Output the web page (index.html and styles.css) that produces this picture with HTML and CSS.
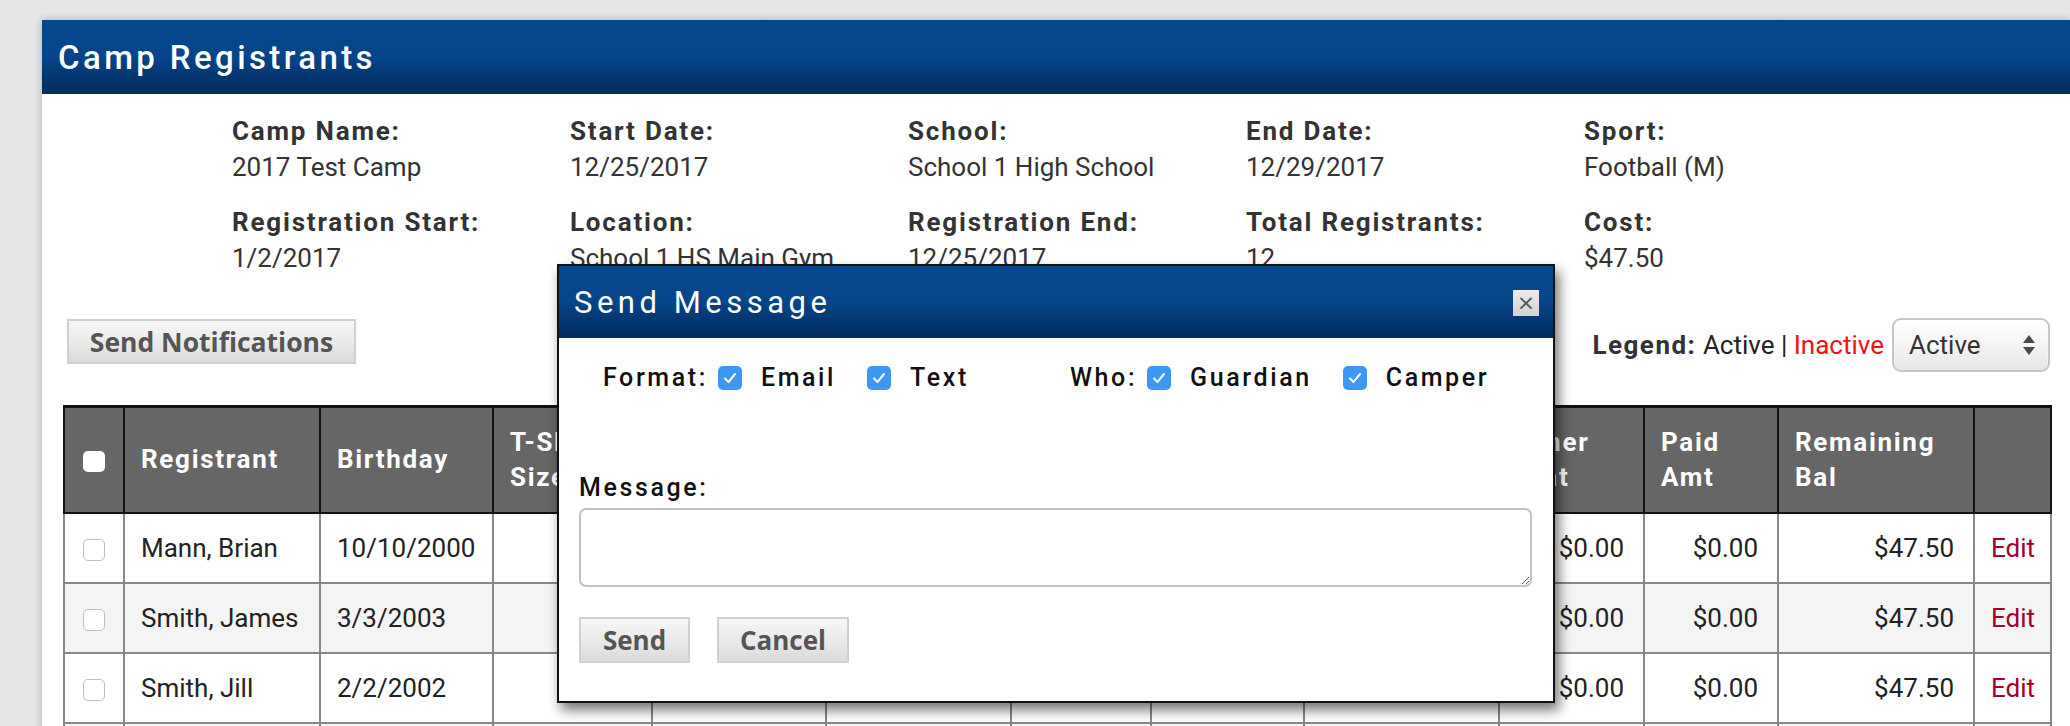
FILE: index.html
```html
<!DOCTYPE html>
<html lang="en">
<head>
<meta charset="utf-8">
<title>Camp Registrants</title>
<link rel="stylesheet" href="styles.css">
</head>
<body>
<div class="panel">
  <div class="panel-head"><h1>Camp Registrants</h1></div>

  <div class="info">
    <div class="field"><div class="lbl">Camp Name:</div><div class="val">2017 Test Camp</div></div>
    <div class="field"><div class="lbl">Start Date:</div><div class="val">12/25/2017</div></div>
    <div class="field"><div class="lbl">School:</div><div class="val">School 1 High School</div></div>
    <div class="field"><div class="lbl">End Date:</div><div class="val">12/29/2017</div></div>
    <div class="field"><div class="lbl">Sport:</div><div class="val">Football (M)</div></div>
    <div class="field"><div class="lbl">Registration Start:</div><div class="val">1/2/2017</div></div>
    <div class="field"><div class="lbl">Location:</div><div class="val">School 1 HS Main Gym</div></div>
    <div class="field"><div class="lbl">Registration End:</div><div class="val">12/25/2017</div></div>
    <div class="field"><div class="lbl">Total Registrants:</div><div class="val">12</div></div>
    <div class="field"><div class="lbl">Cost:</div><div class="val">$47.50</div></div>
  </div>

  <div class="toolbar">
    <button class="btn btn-notify" type="button">Send Notifications</button>
    <div class="legend"><span class="legend-lbl">Legend:</span> Active | <span class="inactive">Inactive</span></div>
    <div class="select">
      <span>Active</span>
      <svg class="select-arrows" width="14" height="22" viewBox="0 0 14 22"><path d="M7 1 L13 9 L1 9 Z" fill="#4a4a4a"/><path d="M1 13 L13 13 L7 21 Z" fill="#4a4a4a"/></svg>
    </div>
  </div>

  <table class="grid">
    <colgroup>
      <col class="c-check"><col class="c-name"><col class="c-bday"><col class="c-shirt"><col class="c-gender"><col class="c-grade"><col class="c-age"><col class="c-fee"><col class="c-disc"><col class="c-other"><col class="c-paid"><col class="c-bal"><col class="c-edit">
    </colgroup>
    <thead>
      <tr>
        <th class="center"><span class="cb cb-head"></span></th>
        <th>Registrant</th>
        <th>Birthday</th>
        <th>T-Shirt<br>Size</th>
        <th>Gender</th>
        <th>Grade</th>
        <th>Age</th>
        <th>Camp<br>Fee</th>
        <th>Discount</th>
        <th>Other<br>Amt</th>
        <th>Paid<br>Amt</th>
        <th>Remaining<br>Bal</th>
        <th></th>
      </tr>
    </thead>
    <tbody>
      <tr>
        <td class="center"><span class="cb"></span></td>
        <td>Mann, Brian</td><td>10/10/2000</td><td></td><td>M</td><td>11</td><td>17</td>
        <td class="num">$47.50</td><td class="num">$0.00</td><td class="num">$0.00</td><td class="num">$0.00</td><td class="num">$47.50</td>
        <td><a class="edit" href="#">Edit</a></td>
      </tr>
      <tr>
        <td class="center"><span class="cb"></span></td>
        <td>Smith, James</td><td>3/3/2003</td><td></td><td>M</td><td>9</td><td>14</td>
        <td class="num">$47.50</td><td class="num">$0.00</td><td class="num">$0.00</td><td class="num">$0.00</td><td class="num">$47.50</td>
        <td><a class="edit" href="#">Edit</a></td>
      </tr>
      <tr>
        <td class="center"><span class="cb"></span></td>
        <td>Smith, Jill</td><td>2/2/2002</td><td></td><td>F</td><td>10</td><td>15</td>
        <td class="num">$47.50</td><td class="num">$0.00</td><td class="num">$0.00</td><td class="num">$0.00</td><td class="num">$47.50</td>
        <td><a class="edit" href="#">Edit</a></td>
      </tr>
      <tr class="row-cut">
        <td></td><td></td><td></td><td></td><td></td><td></td><td></td>
        <td></td><td></td><td></td><td></td><td></td><td></td>
      </tr>
    </tbody>
  </table>
</div>

<div class="modal">
  <div class="modal-head">
    <h2>Send Message</h2>
    <button class="close" type="button">×</button>
  </div>
  <div class="modal-body">
    <div class="opts">
      <div class="opt-group">
        <span class="opt-lbl">Format:</span>
        <span class="cb cb-on"><svg viewBox="0 0 24 24" width="24" height="24"><path d="M7 12.5 L10.5 16 L17 8" fill="none" stroke="#fff" stroke-width="2" stroke-linecap="round" stroke-linejoin="round"/></svg></span>
        <span class="opt-txt">Email</span>
        <span class="cb cb-on"><svg viewBox="0 0 24 24" width="24" height="24"><path d="M7 12.5 L10.5 16 L17 8" fill="none" stroke="#fff" stroke-width="2" stroke-linecap="round" stroke-linejoin="round"/></svg></span>
        <span class="opt-txt">Text</span>
      </div>
      <div class="opt-group">
        <span class="opt-lbl">Who:</span>
        <span class="cb cb-on"><svg viewBox="0 0 24 24" width="24" height="24"><path d="M7 12.5 L10.5 16 L17 8" fill="none" stroke="#fff" stroke-width="2" stroke-linecap="round" stroke-linejoin="round"/></svg></span>
        <span class="opt-txt">Guardian</span>
        <span class="cb cb-on"><svg viewBox="0 0 24 24" width="24" height="24"><path d="M7 12.5 L10.5 16 L17 8" fill="none" stroke="#fff" stroke-width="2" stroke-linecap="round" stroke-linejoin="round"/></svg></span>
        <span class="opt-txt">Camper</span>
      </div>
    </div>
    <div class="msg-lbl">Message:</div>
    <textarea class="msg"></textarea>
    <div class="modal-actions">
      <button class="btn btn-send" type="button">Send</button>
      <button class="btn btn-cancel" type="button">Cancel</button>
    </div>
  </div>
</div>
</body>
</html>
```

FILE: styles.css
```css
* { box-sizing: border-box; }

html, body {
  margin: 0;
  height: 100%;
}

body {
  background: #e6e6e6;
  font-family: Roboto, "Liberation Sans", sans-serif;
  color: #333;
  overflow: hidden;
  padding-top: 20px;
  position: relative;
}

.panel {
  margin-left: 42px;
  background: #fff;
  min-height: 706px;
  box-shadow: 0 0 8px rgba(0, 0, 0, 0.25);
}

.panel-head {
  height: 74px;
  display: flex;
  align-items: center;
  padding-left: 16px;
  background: linear-gradient(to bottom, #06478e 0%, #05458a 50%, #033671 75%, #022c5e 100%);
}

.panel-head h1 {
  margin: 0;
  font-family: Roboto, sans-serif;
  font-weight: 500;
  font-size: 33px;
  letter-spacing: 3.4px;
  color: #fff;
}

/* info grid */
.info {
  display: grid;
  grid-template-columns: repeat(5, 338px);
  row-gap: 19px;
  padding: 19px 0 0 190px;
  font-size: 26px;
  line-height: 36px;
}

.lbl {
  font-weight: 700;
  letter-spacing: 1.8px;
  color: #333;
}

.val {
  color: #333;
}

/* toolbar */
.toolbar {
  display: flex;
  align-items: flex-start;
  margin-top: 42px;
  padding: 0 20px 0 25px;
}

.btn {
  font-family: "Open Sans", "Liberation Sans", sans-serif;
  font-weight: 700;
  color: #555;
  background: linear-gradient(to bottom, #f7f7f7 0%, #e9e9e9 55%, #dadada 100%);
  border: 2px solid #d0d0d0;
  border-radius: 0;
  padding: 0;
  cursor: pointer;
}

.btn-notify {
  margin-top: 1px;
  width: 289px;
  height: 45px;
  font-size: 26.5px;
}

.legend {
  margin-left: auto;
  margin-right: 8px;
  align-self: center;
  font-size: 26px;
  color: #222;
}

.legend-lbl {
  font-weight: 700;
  letter-spacing: 1.5px;
  color: #333;
}

.inactive {
  color: #f51010;
}

.select {
  width: 158px;
  height: 54px;
  border: 2px solid #c6c6c6;
  border-radius: 9px;
  background: linear-gradient(to bottom, #ffffff 0%, #f3f3f3 55%, #e6e6e6 100%);
  box-shadow: inset 0 1px 2px rgba(255, 255, 255, 0.9);
  display: flex;
  align-items: center;
  justify-content: space-between;
  padding: 0 12px 0 15px;
  font-size: 26px;
  color: #333;
}

/* table */
.grid {
  margin: 33px 20px 0 21px;
  width: 1987px;
  border-collapse: collapse;
  table-layout: fixed;
  font-size: 26px;
}

.c-check { width: 60px; }
.c-name { width: 196px; }
.c-bday { width: 173px; }
.c-shirt { width: 159px; }
.c-gender { width: 174px; }
.c-grade { width: 185px; }
.c-age { width: 140px; }
.c-fee { width: 153px; }
.c-disc { width: 195px; }
.c-other { width: 145px; }
.c-paid { width: 134px; }
.c-bal { width: 196px; }
.c-edit { width: 77px; }

.grid th {
  height: 106px;
  background: #666;
  color: #fff;
  font-weight: 700;
  letter-spacing: 1.7px;
  text-align: left;
  line-height: 35px;
  padding: 0 15px 0 16px;
  border: 2px solid #111;
  border-top-width: 3px;
}

.grid td {
  height: 70px;
  padding: 0 15px 0 16px;
  border: 2px solid #888;
  color: #222;
  white-space: nowrap;
}

.grid tbody tr:nth-child(even) td {
  background: #f4f4f4;
}

.grid .center {
  text-align: center;
  padding: 0;
}

.grid td.num {
  text-align: right;
  padding-right: 19px;
}

.edit {
  color: #a3002c;
  text-decoration: none;
}

.cb {
  display: inline-block;
  width: 22px;
  height: 22px;
  border-radius: 5px;
  border: 1px solid #bdbdbd;
  background: #fff;
  vertical-align: middle;
}

.cb-head {
  border: none;
  width: 22px;
  height: 21px;
}

/* modal */
.modal {
  position: absolute;
  left: 557px;
  top: 264px;
  width: 998px;
  background: #fff;
  border: 2px solid #111;
  box-shadow: 4px 7px 12px rgba(0, 0, 0, 0.55);
}

.modal-head {
  height: 72px;
  display: flex;
  align-items: center;
  justify-content: space-between;
  padding: 0 14px 0 15px;
  background: linear-gradient(to bottom, #06478e 0%, #05458a 50%, #033671 75%, #022c5e 100%);
}

.modal-head h2 {
  margin: 0;
  font-family: Roboto, sans-serif;
  font-weight: 400;
  font-size: 31px;
  letter-spacing: 4.5px;
  color: #fff;
}

.close {
  width: 26px;
  height: 26px;
  margin-top: 2px;
  padding: 0;
  border: none;
  background: linear-gradient(to bottom, #ececec 0%, #dcdcdc 60%, #d2d2d2 100%);
  color: #555;
  font-family: "DejaVu Sans", sans-serif;
  font-size: 22px;
  line-height: 26px;
  text-align: center;
}

.modal-body {
  padding: 22px 21px 38px 20px;
  font-size: 25px;
  font-weight: 500;
  letter-spacing: 2.6px;
  color: #111;
}

.opts {
  display: grid;
  grid-template-columns: 467px auto;
  padding-left: 24px;
  line-height: 36px;
}

.opt-group {
  display: flex;
  align-items: center;
}

.opt-group .cb-on {
  width: 24px;
  height: 24px;
  border: none;
  border-radius: 5px;
  background: #3c98f4;
  margin: 0 19px 0 10px;
  display: flex;
}

.opt-txt + .cb-on {
  margin-left: 31px;
}

.msg-lbl {
  margin-top: 74px;
  line-height: 36px;
}

.msg {
  display: block;
  margin-top: 2px;
  width: 953px;
  height: 79px;
  border: 2px solid #c2c2c2;
  border-radius: 7px;
  font-family: Roboto, sans-serif;
  font-size: 24px;
  resize: both;
  outline: none;
}

.modal-actions {
  display: flex;
  gap: 27px;
  margin-top: 30px;
}

.btn-send {
  width: 111px;
  height: 46px;
  font-size: 26px;
  letter-spacing: 0;
}

.btn-cancel {
  width: 132px;
  height: 46px;
  font-size: 26px;
  letter-spacing: 0;
}
```
